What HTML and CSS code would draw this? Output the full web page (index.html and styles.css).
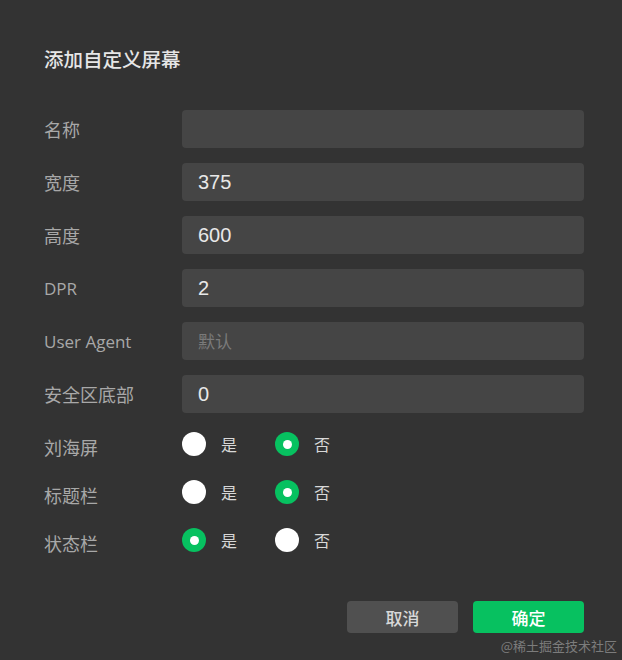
FILE: index.html
```html
<!DOCTYPE html>
<html lang="zh-CN">
  <head>
    <meta charset="UTF-8" />
    <meta name="viewport" content="width=device-width, initial-scale=1" />
    <title>添加自定义屏幕</title>
    <link rel="stylesheet" href="styles.css">
  </head>
  <body>
    <div class="dialog">
      <h2 class="dialog-title">添加自定义屏幕</h2>

      <!-- ===== FIELDS ===== -->
      <form class="form">
        <div class="row">
          <label class="label">名称</label>
          <input class="input" type="text" value="" />
        </div>
        <div class="row">
          <label class="label">宽度</label>
          <input class="input" type="text" value="375" />
        </div>
        <div class="row">
          <label class="label">高度</label>
          <input class="input" type="text" value="600" />
        </div>
        <div class="row">
          <label class="label label-en">DPR</label>
          <input class="input" type="text" value="2" />
        </div>
        <div class="row">
          <label class="label label-en">User Agent</label>
          <input class="input" type="text" placeholder="默认" />
        </div>
        <div class="row">
          <label class="label">安全区底部</label>
          <input class="input" type="text" value="0" />
        </div>

        <div class="radio-rows">
          <div class="radio-row">
            <span class="label">刘海屏</span>
            <div class="radio-group">
              <span class="radio"><i class="dot"></i>是</span>
              <span class="radio"><i class="dot on"></i>否</span>
            </div>
          </div>
          <div class="radio-row">
            <span class="label">标题栏</span>
            <div class="radio-group">
              <span class="radio"><i class="dot"></i>是</span>
              <span class="radio"><i class="dot on"></i>否</span>
            </div>
          </div>
          <div class="radio-row">
            <span class="label">状态栏</span>
            <div class="radio-group">
              <span class="radio"><i class="dot on"></i>是</span>
              <span class="radio"><i class="dot"></i>否</span>
            </div>
          </div>
        </div>
      </form>

      <!-- ===== FOOTER ===== -->
      <div class="footer">
        <button class="btn btn-cancel" type="button">取消</button>
        <button class="btn btn-ok" type="button">确定</button>
      </div>
    </div>
    <div class="watermark">@稀土掘金技术社区</div>
  </body>
</html>
```

FILE: styles.css
```css
:root{
  --c-bg:#333333;
  --c-input:#454545;
  --c-label:#a8a8a8;
  --c-text:#e8e8e8;
  --c-green:#07c160;
}
*,*::before,*::after{box-sizing:border-box;margin:0;padding:0}
html,body{height:100%;background:var(--c-bg);overflow:hidden}
body{font-family:"Noto Sans CJK SC","Liberation Sans",sans-serif;color:var(--c-text);position:relative}

/* ===== DIALOG ===== */
.dialog{padding:44px 38px 0 44px}
.dialog-title{font-size:19.5px;font-weight:500;color:#e6e6e6;line-height:30px;margin-bottom:36px}

/* fields */
.form{display:flex;flex-direction:column}
.row{display:flex;align-items:center;height:38px;margin-bottom:15px}
.label{width:138px;flex:none;font-size:18px;color:var(--c-label)}
.label-en{font-family:"Open Sans",sans-serif;font-size:17px}
.input{flex:1;height:38px;background:var(--c-input);border:none;border-radius:4px;padding:0 16px;font-family:"Liberation Sans","Noto Sans CJK SC",sans-serif;font-size:20px;color:var(--c-text);outline:none}
.input::placeholder{color:#7a7a7a;font-size:17px}

/* radios */
.radio-rows{display:flex;flex-direction:column;gap:24px;margin-top:4px}
.radio-row{display:flex;align-items:center;height:24px}
.radio-row .label{padding-top:5px}
.radio-group{display:flex}
.radio{display:flex;align-items:center;width:93px;font-size:16px;color:#d8d8d8}
.dot{width:24px;height:24px;border-radius:50%;background:#fff;margin-right:15px;flex:none;position:relative}
.dot.on{background:var(--c-green)}
.dot.on::after{content:"";position:absolute;left:50%;top:50%;width:9px;height:9px;margin:-4.5px 0 0 -4.5px;border-radius:50%;background:#fff}

/* ===== FOOTER ===== */
.footer{display:flex;justify-content:flex-end;gap:15px;margin-top:49px}
.btn{width:111px;height:32px;border:none;border-radius:4px;font-family:"Noto Sans CJK SC",sans-serif;font-size:17px;font-weight:500;cursor:pointer}
.btn-cancel{background:#505050;color:#d8d8d8}
.btn-ok{background:var(--c-green);color:#fff}

.watermark{position:absolute;right:5px;bottom:5px;font-size:13px;color:#7c7c7c;font-family:"Noto Sans CJK SC",sans-serif}
```
